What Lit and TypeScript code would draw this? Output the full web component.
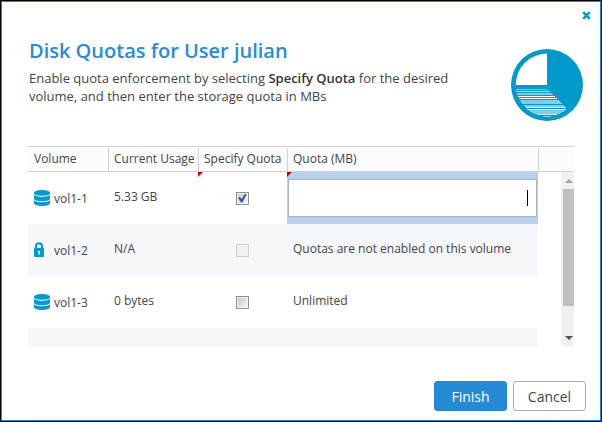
import { LitElement, html, css, svg, nothing } from "lit";
import { customElement, state } from "lit/decorators.js";

interface Volume {
  name: string;
  icon: "disk" | "lock";
  usage: string;
  specify: boolean;
  enabled: boolean;
  quota: string;
}

const closeIcon = html`<svg width="9" height="9" viewBox="0 0 9 9" aria-hidden="true">
  <path d="M1.2 1.2 7.8 7.8M7.8 1.2 1.2 7.8" stroke="#0099cc" stroke-width="2.6" fill="none" />
</svg>`;

const diskIcon = html`<svg width="16" height="16" viewBox="0 0 16 16" aria-hidden="true">
  <path d="M0 2.800C0 1.200 3.500 0 8 0s8 1.200 8 2.800v10.400c0 1.600-3.500 2.800-8 2.800s-8-1.200-8-2.800Z" fill="#0099cc" />
  <path d="M-.5 3.800C1 5.600 4 6.300 8 6.300s7-.7 8.500-2.500M-.5 9.200c1.500 1.800 4.500 2.500 8.500 2.500s7-.7 8.500-2.500" fill="none" stroke="#fff" stroke-width="1" />
</svg>`;

const lockIcon = html`<svg width="16" height="16" viewBox="0 0 16 16" aria-hidden="true">
  <path d="M2 8V4.200a3 3 0 0 1 6 0V8" fill="none" stroke="#0099cc" stroke-width="2" />
  <rect y="6" width="10" height="9" rx=".7" fill="#0099cc" />
  <path d="M4 9h2v1.500h-.5V13h-1v-2.500H4Z" fill="#fff" />
</svg>`;

// [y, left, right, opacity] of each line in the hatched part of the pie
const hatch: number[][] = [
  [40, 5, 37, 0.5], [42, 5, 39, 0.7], [44, 6, 41, 0.5], [45, 6, 42, 0.5],
  [47, 7, 44, 1], [49, 8, 46, 1], [51, 9, 48, 0.5], [52, 10, 49, 0.5],
  [53, 10, 50, 0.5], [54, 11, 51, 0.5], [56, 13, 53, 0.5], [57, 14, 54, 0.5],
  [58, 15, 55, 1], [60, 16, 55, 1], [61, 18, 54, 0.5], [62, 19, 53, 0.5],
  [63, 21, 51, 0.5], [64, 23, 49, 0.5], [65, 26, 46, 0.8], [67, 32, 40, 0.5],
];

const pieIcon = html`<svg width="72" height="72" viewBox="0 0 72 72" aria-hidden="true">
  <circle cx="36" cy="36" r="36" fill="#0099cc" />
  <path d="M36 4.500V36H4.800A31.500 31.500 0 0 1 36 4.500Z" fill="#fff" />
  ${hatch.map(([y, a, b, o]) => svg`<rect x=${a} y=${y} width=${b - a} height="1" fill="#fff" fill-opacity=${o} />`)}
</svg>`;

@customElement("app-root")
export class AppRoot extends LitElement {
  @state() private volumes: Volume[] = [
    { name: "vol1-1", icon: "disk", usage: "5.33 GB", specify: true, enabled: true, quota: "" },
    { name: "vol1-2", icon: "lock", usage: "N/A", specify: false, enabled: false, quota: "Quotas are not enabled on this volume" },
    { name: "vol1-3", icon: "disk", usage: "0 bytes", specify: false, enabled: true, quota: "Unlimited" },
  ];

  static styles = css`
    :host {
      display: block;
      font-family: "Open Sans", "Noto Sans", sans-serif;
      font-size: 12px;
      color: #444;
    }
    * { box-sizing: border-box; }
    .frame { border: 1px solid #000; }
    .dialog {
      position: relative;
      border: 1px solid #1e88dc;
      background: #fff;
      padding: 33px 0 9px;
    }
    .close {
      position: absolute;
      top: 9px;
      right: 9px;
      display: flex;
      padding: 0;
      border: 0;
      background: none;
    }
    .intro {
      display: flex;
      justify-content: space-between;
      gap: 16px;
      padding: 0 17px 0 27px;
    }
    h1 {
      margin: 0 0 2px;
      font-size: 20px;
      line-height: 32px;
      font-weight: 600;
      color: #2a8ad8;
    }
    .intro p { margin: 0; font-size: 13px; line-height: 18px; }
    .intro b { font-weight: 600; color: #333; }
    .pie { display: flex; padding-top: 14px; }
    .grid {
      position: relative;
      height: 200px;
      margin: 25px 26px 35px;
      overflow: hidden;
    }
    table {
      width: 100%;
      table-layout: fixed;
      border-collapse: separate;
      border-spacing: 0;
    }
    .c-volume { width: 80px; }
    .c-usage { width: 90px; }
    .c-specify { width: 89px; }
    .c-end { width: 36px; }
    th {
      height: 26px;
      padding: 1px 0 0;
      border: solid #d0d0d0;
      border-width: 1px 0;
      background: #fcfcfc;
      font-weight: 400;
      text-align: left;
    }
    .head {
      display: block;
      height: 23px;
      line-height: 22px;
      padding-left: 5px;
      white-space: nowrap;
      border-left: 1px solid #d0d0d0;
    }
    th:first-child .head { border-left-color: transparent; }
    td {
      position: relative;
      height: 52px;
      padding: 0 0 0 6px;
    }
    tr:nth-child(even) td:not(.blank) { background: #f5f7fa; }
    .volume { display: flex; align-items: center; gap: 4px; }
    .volume span { padding-top: 1px; }
    .usage, .quota { padding-bottom: 3px; }
    .center { padding: 0; }
    .edited::before {
      content: "";
      position: absolute;
      top: 0;
      left: 0;
      width: 5px;
      height: 5px;
      background: #c00000;
      clip-path: polygon(0 0, 100% 0, 0 100%);
    }
    .editing { padding: 0 1px; background: #b8cfee; }
    .field { position: relative; display: flex; }
    .field input {
      width: 100%;
      height: 38px;
      padding: 0 8px;
      border: 1px solid #a9b1c9;
      background: #fff;
      font: inherit;
      text-align: right;
      outline: 0;
    }
    .caret {
      position: absolute;
      top: 11px;
      right: 9px;
      width: 1px;
      height: 16px;
      background: #000;
    }
    .check {
      appearance: none;
      display: block;
      position: relative;
      width: 13px;
      height: 13px;
      margin: 0 auto;
      padding: 1px;
      border: 1px solid #8e8f8f;
      background: linear-gradient(135deg, #c4c9d0, #f6f6f6) content-box, #f4f4f4;
    }
    .check:disabled { border-color: #d0d2d4; background: #f0f0f0; }
    .check:checked::after {
      content: "";
      position: absolute;
      inset: 1px;
      background: #4055a0;
      clip-path: polygon(0 45%, 22% 38%, 40% 62%, 78% 0, 100% 0, 50% 100%, 32% 100%);
    }
    .scrollbar {
      position: absolute;
      top: 26px;
      right: 0;
      bottom: 0;
      width: 13px;
      display: flex;
      flex-direction: column;
      justify-content: space-between;
      padding-left: 2px;
      background: #f0f0f0;
    }
    .step { display: flex; height: 17px; align-items: center; padding-left: 2px; }
    .thumb { flex: none; height: 117px; margin-bottom: 23px; background: #c0c0c0; }
    .actions { display: flex; justify-content: flex-end; gap: 6px; padding-right: 14px; }
    .actions button {
      width: 73px;
      height: 30px;
      padding: 0;
      border: 1px solid #aaa;
      border-radius: 3px;
      background: #fff;
      font: 14px "Open Sans", "Noto Sans", sans-serif;
      color: #444;
    }
    .actions .primary { border-color: #258ad6; background: #258ad6; color: #fff; }
  `;

  private toggle(index: number, event: Event) {
    const specify = (event.target as HTMLInputElement).checked;
    this.volumes = this.volumes.map((v, i) => (i === index ? { ...v, specify } : v));
  }

  private row(v: Volume, index: number) {
    return html`<tr>
      <td><div class="volume">${v.icon === "disk" ? diskIcon : lockIcon}<span>${v.name}</span></div></td>
      <td class="usage">${v.usage}</td>
      <td class="center ${v.specify ? "edited" : ""}">
        <input class="check" type="checkbox" aria-label="Specify quota for ${v.name}"
          .checked=${v.specify} ?disabled=${!v.enabled}
          @change=${(e: Event) => this.toggle(index, e)} />
      </td>
      ${v.specify
        ? html`<td class="editing edited"><div class="field">
            <input type="text" inputmode="numeric" aria-label="Quota (MB) for ${v.name}" .value=${v.quota} />
            <span class="caret"></span>
          </div></td>`
        : html`<td class="quota">${v.quota}</td>`}
      <td class="blank"></td>
    </tr>`;
  }

  render() {
    return html`<div class="frame"><div class="dialog" role="dialog" aria-labelledby="title">
      <button class="close" aria-label="Close">${closeIcon}</button>
      <header class="intro">
        <div>
          <h1 id="title">Disk Quotas for User julian</h1>
          <p>Enable quota enforcement by selecting <b>Specify Quota</b> for the desired<br />volume, and then enter the storage quota in MBs</p>
        </div>
        <div class="pie">${pieIcon}</div>
      </header>
      <div class="grid">
        <table>
          <colgroup>
            <col class="c-volume" /><col class="c-usage" /><col class="c-specify" /><col /><col class="c-end" />
          </colgroup>
          <thead><tr>
            ${["Volume", "Current Usage", "Specify Quota", "Quota (MB)", ""].map(
              (label) => html`<th scope="col"><span class="head">${label || nothing}</span></th>`
            )}
          </tr></thead>
          <tbody>
            ${this.volumes.map((v, i) => this.row(v, i))}
            <tr><td></td><td></td><td></td><td></td><td class="blank"></td></tr>
          </tbody>
        </table>
        <div class="scrollbar" aria-hidden="true">
          <div class="step"><svg width="8" height="4" viewBox="0 0 8 4"><path d="M0 4 4 0l4 4Z" fill="#a3a3a3" /></svg></div>
          <div class="thumb"></div>
          <div class="step"><svg width="8" height="4" viewBox="0 0 8 4"><path d="M0 0 4 4l4-4Z" fill="#505050" /></svg></div>
        </div>
      </div>
      <footer class="actions">
        <button class="primary">Finish</button>
        <button>Cancel</button>
      </footer>
    </div></div>`;
  }
}
